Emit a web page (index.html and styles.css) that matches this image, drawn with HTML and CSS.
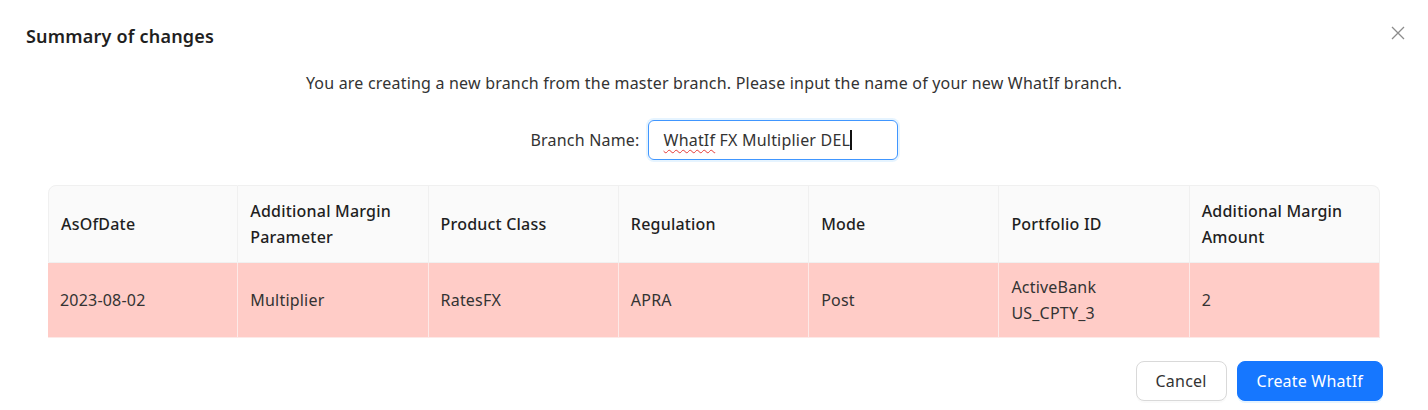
FILE: index.html
```html
<!DOCTYPE html>
<html lang="en">
  <head>
    <meta charset="UTF-8" />
    <meta name="viewport" content="width=device-width, initial-scale=1" />
    <title>Summary of changes</title>
    <link rel="stylesheet" href="styles.css">
  </head>
  <body>
    <div class="modal">
      <div class="modal-header">
        <h2 class="modal-title">Summary of changes</h2>
        <span class="modal-close">
          <svg width="14" height="14" viewBox="0 0 14 14">
            <path d="M1 1 L13 13 M13 1 L1 13" stroke="#8c8c8c" stroke-width="1.3" fill="none" />
          </svg>
        </span>
      </div>

      <p class="intro">
        You are creating a new branch from the master branch. Please input the name of your new WhatIf branch.
      </p>

      <div class="branch-row">
        <label for="branchName">Branch Name:</label>
        <div id="branchName" class="branch-input">
          <span class="misspelled">WhatIf</span> FX Multiplier DEL<span class="caret"></span>
        </div>
      </div>

      <!-- Changes table -->
      <div class="table-wrap">
        <table class="changes">
          <thead>
            <tr>
              <th>AsOfDate</th>
              <th>Additional Margin Parameter</th>
              <th>Product Class</th>
              <th>Regulation</th>
              <th>Mode</th>
              <th>Portfolio ID</th>
              <th>Additional Margin Amount</th>
            </tr>
          </thead>
          <tbody>
            <tr class="row-deleted">
              <td>2023-08-02</td>
              <td>Multiplier</td>
              <td>RatesFX</td>
              <td>APRA</td>
              <td>Post</td>
              <td>ActiveBank<br />US_CPTY_3</td>
              <td>2</td>
            </tr>
          </tbody>
        </table>
      </div>

      <div class="modal-footer">
        <button type="button" class="btn">Cancel</button>
        <button type="button" class="btn btn-primary">Create WhatIf</button>
      </div>
    </div>
  </body>
</html>
```

FILE: styles.css
```css
/* Global Styles */
body {
  font-family: "Segoe UI", "Noto Sans", sans-serif;
  background-color: white;
  color: rgba(0, 0, 0, 0.88);
  letter-spacing: 0.2px;
  margin: 0;
}

/* Modal */
.modal {
  width: 1428px;
  height: 410px;
  box-sizing: border-box;
}

.modal-header {
  display: flex;
  justify-content: space-between;
  align-items: center;
  padding: 22px 23px 0 26px;
  height: 28px;
}

.modal-title {
  margin: 0;
  font-size: 18px;
  font-weight: 600;
  line-height: 28px;
  color: #1f1f1f;
}

.modal-close {
  display: flex;
  cursor: pointer;
  margin-top: -6px;
}

.intro {
  margin: 21px 0 0;
  text-align: center;
  font-size: 16px;
  line-height: 24px;
  color: #333;
}

/* Branch name input */
.branch-row {
  display: flex;
  justify-content: center;
  align-items: center;
  gap: 8px;
  margin-top: 25px;
  font-size: 16px;
}

.branch-row label {
  color: #333;
}

.branch-input {
  width: 250px;
  height: 40px;
  box-sizing: border-box;
  padding: 0 15px;
  border: 1px solid #4096ff;
  border-radius: 6px;
  box-shadow: 0 0 0 2px rgba(5, 145, 255, 0.1);
  display: flex;
  align-items: center;
  white-space: pre;
  color: #333;
}

.misspelled {
  text-decoration: underline wavy #e53935;
  text-decoration-thickness: 1px;
  text-underline-offset: 3px;
}

.caret {
  display: inline-block;
  width: 2px;
  height: 20px;
  background-color: #111;
}

/* Table */
.table-wrap {
  margin: 25px 48px 0;
}

.changes {
  width: 100%;
  table-layout: fixed;
  border-collapse: separate;
  border-spacing: 0;
  font-size: 16px;
  line-height: 26px;
}

.changes th,
.changes td {
  text-align: left;
  vertical-align: middle;
  border-right: 1px solid #f0f0f0;
  border-bottom: 1px solid #f0f0f0;
}

.changes th {
  background-color: #fafafa;
  font-weight: 500;
  padding: 12px 12px;
  color: #1f1f1f;
  border-top: 1px solid #f0f0f0;
}

.changes th:first-child {
  border-left: 1px solid #f0f0f0;
  border-top-left-radius: 8px;
}

.changes th:last-child {
  border-top-right-radius: 8px;
}

.changes td {
  padding: 11px 12px;
  color: #333;
}

.row-deleted td {
  background-color: #ffccc7;
  border-right-color: #fde9e7;
  border-bottom-color: #fde9e7;
}

/* Footer buttons */
.modal-footer {
  display: flex;
  justify-content: flex-end;
  gap: 10px;
  margin-top: 23px;
  padding-right: 45px;
}

.btn {
  height: 40px;
  padding: 0 19px;
  font-family: inherit;
  font-size: 16px;
  letter-spacing: inherit;
  color: #333;
  background-color: white;
  border: 1px solid #d9d9d9;
  border-radius: 8px;
  box-shadow: 0 2px 0 rgba(0, 0, 0, 0.02);
  cursor: pointer;
}

.btn-primary {
  color: white;
  background-color: #1677ff;
  border-color: #1677ff;
  box-shadow: 0 2px 0 rgba(5, 145, 255, 0.1);
}
```
